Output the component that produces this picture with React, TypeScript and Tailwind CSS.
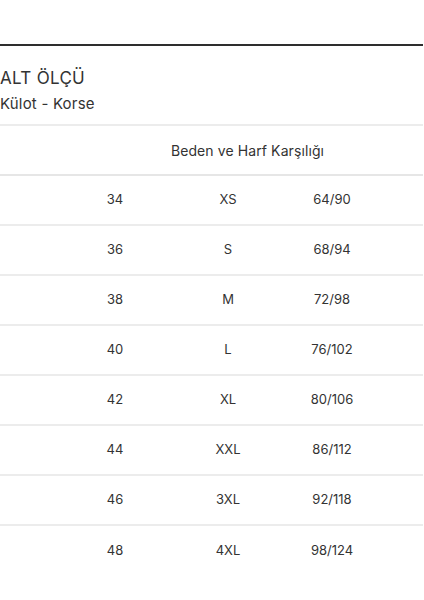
import React from "react";

const rows = [
  ["34", "XS", "64/90"],
  ["36", "S", "68/94"],
  ["38", "M", "72/98"],
  ["40", "L", "76/102"],
  ["42", "XL", "80/106"],
  ["44", "XXL", "86/112"],
  ["46", "3XL", "92/118"],
  ["48", "4XL", "98/124"],
];

export default function App() {
  return (
    <div className="w-[424px] h-[600px] bg-white text-[#333] pt-[44px] pr-[1px]" style={{ fontFamily: "Inter, 'Open Sans', sans-serif" }}>
      <div className="border-t-2 border-[#2e2e2e]" />
      <div className="pt-[20px] pb-[10px] border-b-2 border-[#ececec]">
        <div className="text-[17px] leading-[24px] tracking-[0.3px]">ALT ÖLÇÜ</div>
        <div className="text-[15px] leading-[20px] mt-[4px] tracking-[0.2px]">Külot - Korse</div>
      </div>
      <div className="h-[50px] flex items-center border-b-2 border-[#e6e6e6]">
        <div className="w-full pl-[72px] text-center text-[14px] tracking-[0.1px]">Beden ve Harf Karşılığı</div>
      </div>
      {rows.map((r, i) => (
        <div
          key={i}
          className={`h-[50px] flex items-center text-[13px] ${i < rows.length - 1 ? "border-b-2 border-[#ececec]" : ""}`}
        >
          <div className="w-[58px]" />
          <div className="w-[114px] text-center">{r[0]}</div>
          <div className="w-[112px] text-center">{r[1]}</div>
          <div className="w-[96px] text-center">{r[2]}</div>
        </div>
      ))}
    </div>
  );
}
